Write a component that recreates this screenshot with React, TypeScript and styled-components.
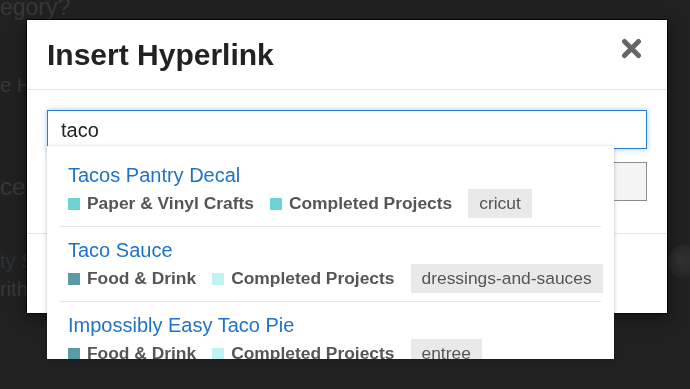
import styled, { createGlobalStyle } from 'styled-components';

type Category = { name: string; color: string };
type Result = { id: number; title: string; categories: Category[]; tag: string };

const RESULTS: Result[] = [
  {
    id: 1,
    title: 'Tacos Pantry Decal',
    categories: [
      { name: 'Paper & Vinyl Crafts', color: '#6cd4d5' },
      { name: 'Completed Projects', color: '#6cd4d5' },
    ],
    tag: 'cricut',
  },
  {
    id: 2,
    title: 'Taco Sauce',
    categories: [
      { name: 'Food & Drink', color: '#5b9ba6' },
      { name: 'Completed Projects', color: '#c0f2f1' },
    ],
    tag: 'dressings-and-sauces',
  },
  {
    id: 3,
    title: 'Impossibly Easy Taco Pie',
    categories: [
      { name: 'Food & Drink', color: '#5b9ba6' },
      { name: 'Completed Projects', color: '#c0f2f1' },
    ],
    tag: 'entree',
  },
];

const GlobalStyle = createGlobalStyle`
  html, body {
    margin: 0;
    height: 100%;
  }
  body {
    background: #222;
    font-family: 'Liberation Sans', Arial, Helvetica, sans-serif;
    overflow: hidden;
  }
`;

export default function App() {
  return (
    <>
      <GlobalStyle />
      <Page>
        <PageText>
          <PageLine $size={23} $top={-4}>egory?</PageLine>
          <PageLine $size={20} $top={56}>e Hyperlink</PageLine>
          <PageLine $size={24} $top={80}>ce</PageLine>
          <PageLine $size={20} $top={52} $color="#2a323a">ty Sauce</PageLine>
          <PageLine $size={20} $top={8}>rith</PageLine>
        </PageText>
        <Avatar />
      </Page>

      <Overlay>
        <Modal>
          <ModalHeader>
            <ModalTitle>Insert Hyperlink</ModalTitle>
            <CloseButton aria-label="Close">
              <svg width="21" height="21" viewBox="0 0 21 21">
                <path
                  d="M3.5 3.5 L17.5 17.5 M17.5 3.5 L3.5 17.5"
                  stroke="#666"
                  strokeWidth="5"
                  strokeLinecap="round"
                />
              </svg>
            </CloseButton>
          </ModalHeader>

          <ModalBody>
            <SearchInput value="taco" readOnly />
            <TextInput readOnly />

            <Dropdown>
              {RESULTS.map((r) => (
                <ResultItem key={r.id}>
                  <ResultTitle>{r.title}</ResultTitle>
                  <ResultMeta>
                    {r.categories.map((c) => (
                      <CategoryBadge key={c.name}>
                        <Swatch $color={c.color} />
                        {c.name}
                      </CategoryBadge>
                    ))}
                    <Tag>{r.tag}</Tag>
                  </ResultMeta>
                </ResultItem>
              ))}
            </Dropdown>
          </ModalBody>

          <ModalFooter />
        </Modal>
      </Overlay>
    </>
  );
}

const Page = styled.div`
  display: flex;
  justify-content: space-between;
  width: 690px;
  height: 389px;
  overflow: hidden;
  background: #212121;
`;

const PageText = styled.div`
  display: flex;
  flex-direction: column;
`;

const PageLine = styled.p<{ $size: number; $top: number; $color?: string }>`
  margin: ${(p) => p.$top}px 0 0;
  font-size: ${(p) => p.$size}px;
  line-height: ${(p) => p.$size}px;
  color: ${(p) => p.$color || '#383838'};
  white-space: nowrap;
`;

const Avatar = styled.div`
  width: 34px;
  height: 34px;
  margin: 245px -12px 0 0;
  border-radius: 50%;
  background: radial-gradient(circle at 40% 45%, #333, #242424 70%);
`;

const Overlay = styled.div`
  position: fixed;
  inset: 0;
  padding: 20px 0 0 27px;
`;

const Modal = styled.div`
  width: 640px;
  height: 293px;
  display: flex;
  flex-direction: column;
  background: #fff;
  box-shadow: 0 0 0 1px rgba(0, 0, 0, 0.7), 0 5px 15px rgba(0, 0, 0, 0.5);
`;

const ModalHeader = styled.div`
  display: flex;
  justify-content: space-between;
  align-items: center;
  height: 69px;
  padding: 0 25px 0 20px;
  border-bottom: 1px solid #e5e5e5;
`;

const ModalTitle = styled.h2`
  margin: 0;
  font-size: 30px;
  font-weight: bold;
  color: #222;
`;

const CloseButton = styled.button`
  align-self: flex-start;
  margin-top: 18px;
  padding: 0;
  border: 0;
  background: none;
  line-height: 0;
  cursor: pointer;
`;

const ModalBody = styled.div`
  position: relative;
  display: flex;
  flex-direction: column;
  gap: 13px;
  padding: 20px 20px 32px;
`;

const SearchInput = styled.input`
  box-sizing: border-box;
  height: 39px;
  padding: 2px 13px 0;
  border: 1px solid #2b7dd0;
  outline: none;
  box-shadow: 0 0 6px rgba(60, 140, 220, 0.45);
  font-family: inherit;
  font-size: 20px;
  color: #222;
`;

const TextInput = styled.input`
  box-sizing: border-box;
  height: 39px;
  border: 1px solid #8c8c8c;
  outline: none;
  background: linear-gradient(to right, #fff, #f4f4f4);
`;

const ModalFooter = styled.div`
  flex: 1;
  border-top: 1px solid #e5e5e5;
`;

const Dropdown = styled.ul`
  position: absolute;
  top: 56px;
  left: 20px;
  width: 567px;
  height: 213px;
  box-sizing: border-box;
  margin: 0;
  padding: 6px 0 0;
  list-style: none;
  overflow: hidden;
  background: #fff;
  box-shadow: 0 1px 4px rgba(0, 0, 0, 0.25);
  z-index: 2;
`;

const ResultItem = styled.li`
  margin: 0 13px;
  padding: 12px 8px 8px;
  border-bottom: 1px solid #e4e4e4;
`;

const ResultTitle = styled.div`
  font-size: 20px;
  line-height: 22px;
  color: #1f73c4;
`;

const ResultMeta = styled.div`
  display: flex;
  align-items: center;
  gap: 16px;
  margin-top: 3px;
`;

const CategoryBadge = styled.span`
  display: flex;
  align-items: center;
  gap: 7px;
  font-size: 17.4px;
  font-weight: bold;
  color: #555;
  white-space: nowrap;
`;

const Swatch = styled.span<{ $color: string }>`
  width: 12px;
  height: 12px;
  background: ${(p) => p.$color};
`;

const Tag = styled.span`
  padding: 0 11px;
  line-height: 29px;
  font-size: 17.4px;
  color: #555;
  background: #e9e9e9;
  white-space: nowrap;
`;
